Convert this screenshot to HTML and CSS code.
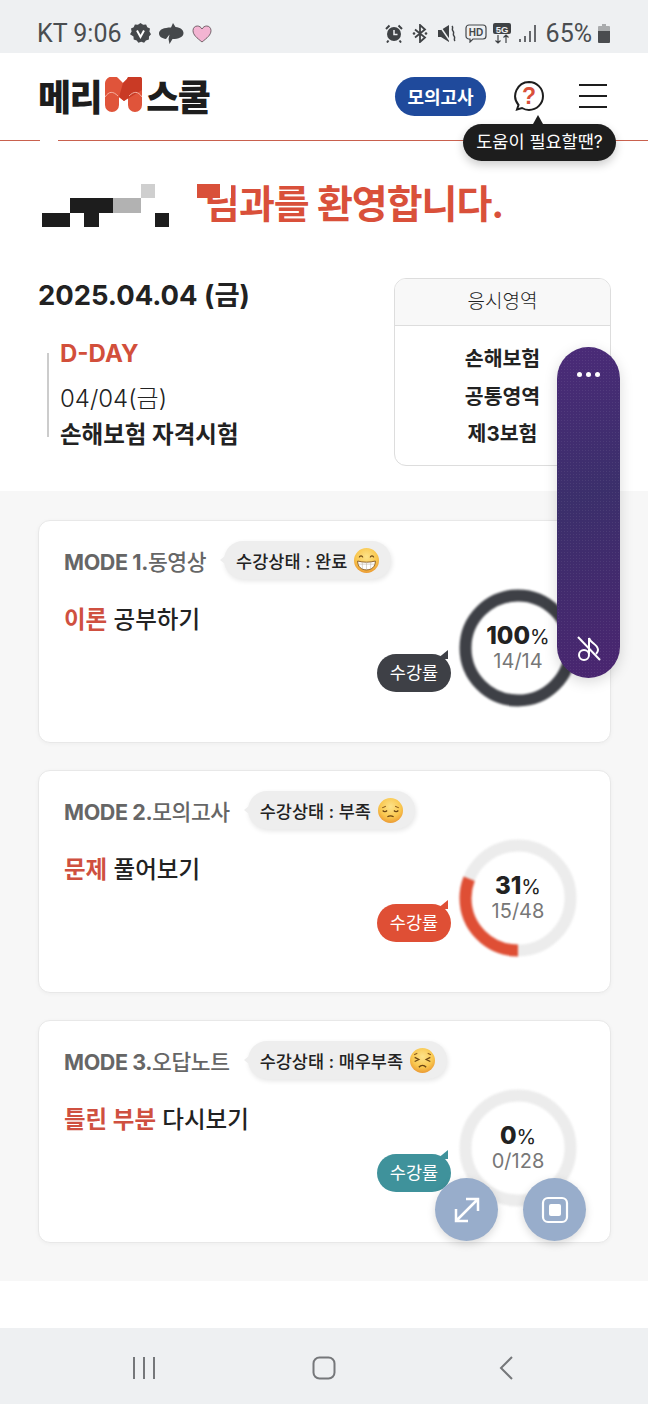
FILE: index.html
```html
<!DOCTYPE html>
<html lang="ko">
<head>
    <meta charset="UTF-8">
    <meta name="viewport" content="width=device-width, initial-scale=1.0">
    <title>메리M스쿨</title>
    <link rel="stylesheet" href="styles.css">
</head>
<body>
    <svg class="defs" width="0" height="0">
        <defs>
            <radialGradient id="face" cx="50%" cy="35%" r="70%">
                <stop offset="0" stop-color="#fde38a"/>
                <stop offset="0.6" stop-color="#f9c74f"/>
                <stop offset="1" stop-color="#e8902c"/>
            </radialGradient>
        </defs>
    </svg>

    <div class="status-bar">
        <div class="status-left">
            <span class="status-text">KT 9:06</span>
            <svg class="st-icon" width="21" height="21" viewBox="0 0 21 21"><path fill="#45484b" d="M10.5 0l2.6 1.7 3-.3 1.2 2.8 2.7 1.4-.6 3 1.6 2.6-2 2.3-.1 3-3 .9-1.8 2.4-2.8-1-2.9 1-1.7-2.4-3-.9-.2-3L0 11.2l1.6-2.6-.6-3 2.7-1.4 1.2-2.8 3 .3z"/><path fill="none" stroke="#fff" stroke-width="2" d="M7 7.5l3.5 6.5L14 7.5"/></svg>
            <svg class="st-icon" width="25" height="21" viewBox="0 0 25 21"><path fill="#45484b" d="M14 0l-2 4.500C5 4.500 0 6.500 0 10.500c0 3 3 5 7 5.500l3.500-4.500-1 4.500 1 5 3-5c6 0 11-2 11-6 0-3-3-5.500-8-6z"/></svg>
            <svg class="st-icon" width="20" height="18" viewBox="0 0 20 18"><path fill="#f3b4d2" stroke="#55484e" stroke-width="0.8" d="M10 17C5 13 1 10 1 5.500 1 2.800 3 1 5.300 1 7.300 1 9 2.200 10 4c1-1.800 2.700-3 4.700-3C17 1 19 2.800 19 5.500 19 10 15 13 10 17z"/></svg>
        </div>
        <div class="status-right">
            <svg width="18" height="19" viewBox="0 0 18 19"><circle cx="9" cy="10" r="7" fill="#3f4245"/><path d="M9 6v4.500h3.500" stroke="#eef0f2" stroke-width="1.500" fill="none"/><path d="M1 5l3.500-3.500M17 5l-3.500-3.500M3.500 16.500L2 18.500M14.500 16.500l1.500 2" stroke="#3f4245" stroke-width="2"/></svg>
            <svg width="16" height="19" viewBox="0 0 16 19"><path d="M3 5.500l10 8-5 4.500V1l5 4.500-10 8" stroke="#3f4245" stroke-width="1.800" fill="none"/><circle cx="2" cy="9.500" r="1.300" fill="#3f4245"/><circle cx="14" cy="9.500" r="1.300" fill="#3f4245"/></svg>
            <svg class="st-mute" width="18" height="19" viewBox="0 0 18 19"><path fill="#3f4245" d="M0 6h3l8-5v17l-8-5H0z"/><path d="M1 1l11 16" stroke="#eef0f2" stroke-width="1.400"/><path d="M14 2c2 2-1 3 1 5s-1 3 1 5-1 3 1 5" stroke="#3f4245" stroke-width="1.500" fill="none"/></svg>
            <svg width="22" height="19" viewBox="0 0 22 19"><path d="M4 1h14a3 3 0 0 1 3 3v8a3 3 0 0 1-3 3H8l-3 3v-3H4a3 3 0 0 1-3-3V4a3 3 0 0 1 3-3z" fill="none" stroke="#45484b" stroke-width="1.200"/><text x="11" y="12" class="svg-small" text-anchor="middle">HD</text></svg>
            <svg class="st-5g" width="18" height="21" viewBox="0 0 18 21"><rect width="18" height="11" rx="2" fill="#3f4245"/><text x="9" y="9.500" class="svg-5g" text-anchor="middle">5G</text><path d="M5 12v8M2.500 17.500L5 20l2.500-2.500M13 20v-8M10.500 14.500L13 12l2.500 2.500" stroke="#3f4245" stroke-width="1.200" fill="none"/></svg>
            <svg class="st-signal" width="18" height="17" viewBox="0 0 18 17"><path d="M1 14v3M6 11v6M11 6v11M16 0v17" stroke="#45484b" stroke-width="1.600"/></svg>
            <span class="status-text">65%</span>
            <svg class="battery" width="12" height="19" viewBox="0 0 12 19"><path fill="#a9abad" d="M4 0h4v2h3a1 1 0 0 1 1 1v4H0V3a1 1 0 0 1 1-1h3z"/><path fill="#4a4c4f" d="M0 7h12v11a1 1 0 0 1-1 1H1a1 1 0 0 1-1-1z"/></svg>
        </div>
    </div>

    <header class="header">
        <div class="logo">
            <span>메리</span>
            <svg class="logo-m" width="37" height="35" viewBox="0 0 37 35">
                <path fill="#e0543a" d="M0 8a8 8 0 0 1 14-6l4 4 4-4a8 8 0 0 1 15 6v20a7 7 0 0 1-14 0V20l-4 4-5-4v8a7 7 0 0 1-14 0z"/>
                <path fill="#c93a25" d="M18 6l4-4a8 8 0 0 1 15 6v5L19 24l-5-4z"/>
                <path d="M0 20c4-6 8-6 13-1M24 19c5-5 9-5 13 1" stroke="#f4b0a0" stroke-width="1" fill="none"/>
            </svg>
            <span>스쿨</span>
        </div>
        <div class="header-right">
            <button class="exam-button">모의고사</button>
            <svg class="help-icon" width="32" height="32" viewBox="0 0 32 32">
                <path d="M16 2a14 14 0 0 1 0 28c-3 0-5-.8-7-2l-5 1.500 1.500-4.500A14 14 0 0 1 16 2z" fill="#fff" stroke="#1d1d1d" stroke-width="2"/>
                <text x="16" y="24" class="svg-help" text-anchor="middle">?</text>
            </svg>
            <div class="menu-icon"><i></i><i></i><i></i></div>
        </div>
        <div class="tooltip">도움이 필요할땐?</div>
        <span class="line-gap"></span>
    </header>

    <section class="intro">
        <h1 class="welcome">
            <svg class="mosaic" width="128" height="43" viewBox="0 0 128 43">
                <rect x="0" y="29" width="28" height="14" fill="#1d1d1d"/>
                <rect x="28" y="14" width="43" height="15" fill="#1d1d1d"/>
                <rect x="42" y="29" width="15" height="14" fill="#1d1d1d"/>
                <rect x="71" y="14" width="28" height="15" fill="#b2b2b2"/>
                <rect x="99" y="0" width="14" height="14" fill="#cfcfcf"/>
                <rect x="113" y="29" width="14" height="14" fill="#1d1d1d"/>
            </svg>
            <span class="welcome-text">님과를 환영합니다.<span class="welcome-mask"></span><span class="welcome-block"></span></span>
        </h1>
        <div class="intro-row">
            <div class="exam-info">
                <div class="exam-date">2025.04.04 (금)</div>
                <div class="dday-box">
                    <div class="dday">D-DAY</div>
                    <div class="dday-date">04/04(금)</div>
                    <div class="dday-name">손해보험 자격시험</div>
                </div>
            </div>
            <div class="subject-table">
                <div class="subject-head">응시영역</div>
                <div class="subject-list">
                    <div>손해보험</div>
                    <div>공통영역</div>
                    <div>제3보험</div>
                </div>
            </div>
        </div>
    </section>

    <main class="modes">
        <div class="card">
            <div class="card-head">
                <span class="mode-title"><b>MODE 1.</b>동영상</span>
                <span class="status-pill">수강상태 : 완료
                    <svg class="emoji" width="25" height="25" viewBox="0 0 24 24"><circle cx="12" cy="12" r="12" fill="url(#face)"/><path d="M5 9c.8-2 2.700-2 3.500 0M15.500 9c.8-2 2.700-2 3.500 0" stroke="#6b4513" stroke-width="1.200" fill="none"/><path d="M3.500 12.500c5 1.500 12 1.500 17 0 0 6-4 8.500-8.500 8.500s-8.500-2.500-8.500-8.500z" fill="#fff" stroke="#7a4a14" stroke-width="0.800"/><path d="M4 15.500h16M12 13.500v7.500M8 13.500v7M16 13.500v7" stroke="#b9b09c" stroke-width="0.500"/></svg>
                </span>
            </div>
            <div class="card-body">
                <div class="card-subject"><em>이론</em> 공부하기</div>
                <div class="progress">
                    <span class="rate-bubble dark">수강률</span>
                    <div class="ring">
                        <svg width="118" height="118" viewBox="0 0 118 118"><circle cx="59" cy="59" r="52.500" fill="none" stroke="#3e4046" stroke-width="12"/></svg>
                        <div class="ring-text"><strong>100<small>%</small></strong><span>14/14</span></div>
                    </div>
                </div>
            </div>
        </div>

        <div class="card">
            <div class="card-head">
                <span class="mode-title"><b>MODE 2.</b>모의고사</span>
                <span class="status-pill">수강상태 : 부족
                    <svg class="emoji" width="25" height="25" viewBox="0 0 24 24"><circle cx="12" cy="12" r="12" fill="url(#face)"/><path d="M4 9.500l3.500-1.500M20 9.500L16.500 8" stroke="#8a5a1c" stroke-width="1" fill="none"/><path d="M4.500 12c1.200 1.500 3 1.500 4.200 0M15.300 12c1.200 1.500 3 1.500 4.200 0" stroke="#6b4513" stroke-width="1.200" fill="none"/><path d="M9 18c2-1.200 4-1.200 6 0" stroke="#6b4513" stroke-width="1.200" fill="none"/></svg>
                </span>
            </div>
            <div class="card-body">
                <div class="card-subject"><em>문제</em> 풀어보기</div>
                <div class="progress">
                    <span class="rate-bubble red">수강률</span>
                    <div class="ring">
                        <svg width="118" height="118" viewBox="0 0 118 118"><circle cx="59" cy="59" r="52.500" fill="none" stroke="#ececec" stroke-width="12"/><circle class="ring-arc" cx="59" cy="59" r="52.500" fill="none" stroke="#df4f35" stroke-width="12" pathLength="100" stroke-dasharray="31 69" transform="rotate(90 59 59)"/></svg>
                        <div class="ring-text"><strong>31<small>%</small></strong><span>15/48</span></div>
                    </div>
                </div>
            </div>
        </div>

        <div class="card">
            <div class="card-head">
                <span class="mode-title"><b>MODE 3.</b>오답노트</span>
                <span class="status-pill">수강상태 : 매우부족
                    <svg class="emoji" width="25" height="25" viewBox="0 0 24 24"><circle cx="12" cy="12" r="12" fill="url(#face)"/><path d="M4.500 9l4 2-4 2M19.500 9l-4 2 4 2" stroke="#6b4513" stroke-width="1.200" fill="none"/><path d="M8.500 18.500c2-2.500 5-2.500 7 0" stroke="#6b4513" stroke-width="1.300" fill="none"/><path d="M4 6.500l3-1.500M20 6.500l-3-1.500" stroke="#8a5a1c" stroke-width="1" fill="none"/></svg>
                </span>
            </div>
            <div class="card-body">
                <div class="card-subject"><em>틀린 부분</em> 다시보기</div>
                <div class="progress">
                    <span class="rate-bubble teal">수강률</span>
                    <div class="ring">
                        <svg width="118" height="118" viewBox="0 0 118 118"><circle cx="59" cy="59" r="52.500" fill="none" stroke="#ececec" stroke-width="12"/></svg>
                        <div class="ring-text"><strong>0<small>%</small></strong><span>0/128</span></div>
                    </div>
                </div>
            </div>
        </div>
    </main>

    <div class="page-end"></div>

    <nav class="nav-bar">
        <svg width="24" height="24" viewBox="0 0 24 24"><path d="M2 1v22M12 1v22M22 1v22" stroke="#75777a" stroke-width="2"/></svg>
        <svg class="nav-home" width="24" height="24" viewBox="0 0 24 24"><rect x="1.500" y="1.500" width="21" height="21" rx="6" fill="none" stroke="#75777a" stroke-width="2"/></svg>
        <svg width="14" height="24" viewBox="0 0 14 24"><path d="M13 1L2 12l11 11" fill="none" stroke="#75777a" stroke-width="2"/></svg>
    </nav>

    <!-- floating media controls -->
    <div class="player">
        <div class="player-dots"><i></i><i></i><i></i></div>
        <svg width="26" height="26" viewBox="0 0 26 26"><circle cx="8" cy="20" r="5" fill="none" stroke="#fff" stroke-width="2"/><path d="M13 19V3c1 5 9 6 9 12 0 2-1 3-2 4" fill="none" stroke="#fff" stroke-width="2"/><path d="M2 2l22 23" stroke="#fff" stroke-width="2"/></svg>
    </div>
    <button class="fab fab-expand"><svg width="28" height="28" viewBox="0 0 28 28"><path d="M3 25L25 3M13 3h12v12M3 13v12h12" fill="none" stroke="#fff" stroke-width="2.500"/></svg></button>
    <button class="fab fab-stop"><svg width="28" height="28" viewBox="0 0 28 28"><rect x="2" y="2" width="24" height="24" rx="5" fill="none" stroke="#fff" stroke-width="2.200"/><rect x="8" y="8" width="12" height="12" rx="2" fill="#fff"/></svg></button>
</body>
</html>
```

FILE: styles.css
```css
* {
    box-sizing: border-box;
}

body {
    font-family: Inter, "Noto Sans CJK KR", sans-serif;
    margin: 0;
    width: 648px;
    height: 1404px;
    overflow: hidden;
    position: relative;
    background-color: #fff;
    color: #222;
}

.defs {
    position: absolute;
}

/* Status bar */
.status-bar {
    height: 53px;
    padding: 14px 38px 0 37px;
    display: flex;
    justify-content: space-between;
    align-items: center;
    background-color: #eef0f2;
}

.status-left,
.status-right {
    display: flex;
    align-items: center;
}

.status-left {
    gap: 7px;
}

.status-right {
    gap: 9px;
}

.status-text {
    font-family: Roboto, sans-serif;
    font-size: 25px;
    color: #4a4d50;
}

.status-left .st-icon {
    margin-left: 1px;
}

.st-mute {
    margin-left: 1px;
}

.st-5g {
    margin-left: -3px;
}

.st-signal {
    margin-left: -1px;
}

.battery {
    margin-left: -3px;
}

.svg-small {
    font: bold 10px "Liberation Sans", sans-serif;
    fill: #45484b;
}

.svg-5g {
    font: bold 9.5px "Liberation Sans", sans-serif;
    fill: #eef0f2;
}

.svg-help {
    font: 900 23px "Liberation Sans", sans-serif;
    fill: #d9503a;
}

/* Header */
.header {
    height: 88px;
    padding: 0 41px 0 38px;
    display: flex;
    justify-content: space-between;
    align-items: center;
    position: relative;
    border-bottom: 1px solid #c9614e;
}

.logo {
    display: flex;
    align-items: center;
    gap: 4px;
    font-family: "Noto Sans CJK KR", sans-serif;
    font-size: 36px;
    font-weight: 900;
    letter-spacing: -1.500px;
    color: #1d1d1d;
    margin-top: -4px;
}

.header-right {
    display: flex;
    align-items: center;
    margin-top: -1px;
}

.exam-button {
    width: 91px;
    height: 39px;
    border: none;
    border-radius: 20px;
    background-color: #1f4a9c;
    color: white;
    font-family: inherit;
    font-size: 18px;
    font-weight: 700;
    padding: 0;
}

.help-icon {
    margin-left: 27px;
}

.menu-icon {
    width: 28px;
    margin-left: 34px;
    display: flex;
    flex-direction: column;
    gap: 8.500px;
}

.menu-icon i {
    display: block;
    height: 2.500px;
    background-color: #1d1d1d;
}

.tooltip {
    position: absolute;
    left: 463px;
    top: 71px;
    width: 153px;
    height: 37px;
    border-radius: 19px;
    background-color: #1d1d1d;
    color: white;
    font-size: 17.500px;
    line-height: 36px;
    text-align: center;
    box-shadow: 0 4px 10px rgba(0, 0, 0, 0.2);
}

.tooltip::before {
    content: "";
    position: absolute;
    left: 70px;
    top: -9px;
    border-left: 5px solid transparent;
    border-right: 5px solid transparent;
    border-bottom: 9px solid #1d1d1d;
}

.line-gap {
    position: absolute;
    left: 40px;
    top: 85px;
    width: 18px;
    height: 4px;
    background-color: #fff;
}

/* Intro */
.intro {
    height: 350px;
    padding: 43px 37px 0 38px;
}

.welcome {
    margin: 0 0 0 4px;
    height: 43px;
    display: flex;
    align-items: flex-start;
    font-size: 39px;
    font-weight: 700;
    color: #d9503a;
    letter-spacing: -1px;
}

.mosaic {
    flex-shrink: 0;
}

.welcome-text {
    position: relative;
    margin: -2px 0 0 34px;
    line-height: 43px;
    white-space: nowrap;
}

.welcome-mask {
    position: absolute;
    left: -7px;
    top: 2px;
    width: 34px;
    height: 14px;
    background-color: #fff;
}

.welcome-block {
    position: absolute;
    left: -7px;
    top: 2px;
    width: 23px;
    height: 14px;
    background-color: #d9503a;
}

.intro-row {
    display: flex;
    justify-content: space-between;
    margin-top: 51px;
}

.exam-date {
    font-size: 27.400px;
    font-weight: 700;
    line-height: 34px;
    white-space: nowrap;
}

.dday-box {
    display: flow-root;
    margin: 41px 0 0 9px;
    padding-left: 11px;
    border-left: 2px solid #ccc;
    height: 84px;
}

.dday {
    font-size: 24px;
    font-weight: 700;
    line-height: 28px;
    margin-top: -13px;
    color: #d24f3b;
}

.dday-date {
    font-size: 24px;
    font-weight: 300;
    line-height: 32px;
    margin-top: 15px;
}

.dday-name {
    font-size: 23.500px;
    font-weight: 700;
    line-height: 34px;
    margin-top: 3px;
    white-space: nowrap;
}

.subject-table {
    width: 217px;
    height: 188px;
    border: 1px solid #ddd;
    border-radius: 12px;
    overflow: hidden;
    text-align: center;
}

.subject-head {
    height: 47px;
    line-height: 45px;
    font-size: 19px;
    font-weight: 300;
    background-color: #f8f8f8;
    border-bottom: 1px solid #ddd;
}

.subject-list {
    padding-top: 14px;
    font-size: 20.500px;
    font-weight: 700;
    line-height: 37.500px;
}

/* Mode cards */
.modes {
    height: 790px;
    padding: 29px 37px 0 38px;
    display: flex;
    flex-direction: column;
    gap: 27px;
    background-color: #f7f7f7;
}

.card {
    height: 223px;
    padding: 20px 33px 0 25px;
    background-color: white;
    border: 1px solid #e8e8e8;
    border-radius: 12px;
    box-shadow: 0 1px 4px rgba(0, 0, 0, 0.04);
}

.card-head {
    display: flex;
    align-items: center;
    height: 38px;
}

.mode-title {
    font-size: 21.500px;
    font-weight: 500;
    color: #666;
    letter-spacing: -0.400px;
    white-space: nowrap;
}

.mode-title b {
    font-weight: 700;
}

.status-pill {
    position: relative;
    height: 38px;
    margin-left: 18px;
    padding: 0 12px;
    display: flex;
    align-items: center;
    gap: 7px;
    border-radius: 19px;
    background-color: #eee;
    font-size: 17.500px;
    font-weight: 500;
    color: #222;
    white-space: nowrap;
    box-shadow: 1px 2px 5px rgba(0, 0, 0, 0.1);
}

.status-pill::before {
    content: "";
    position: absolute;
    left: -4px;
    top: 15px;
    border-top: 4px solid transparent;
    border-bottom: 4px solid transparent;
    border-right: 5px solid #eee;
}

.card-body {
    display: flex;
    justify-content: space-between;
    align-items: flex-start;
    margin-top: 10px;
}

.card-subject {
    margin-top: 14px;
    font-size: 23.500px;
    font-weight: 500;
    line-height: 34px;
}

.card-subject em {
    font-style: normal;
    font-weight: 700;
    color: #cf5040;
}

.progress {
    display: flex;
    align-items: flex-start;
    gap: 8px;
}

.rate-bubble {
    position: relative;
    margin-top: 65px;
    width: 74px;
    height: 38px;
    border-radius: 19px;
    color: white;
    font-size: 17.500px;
    line-height: 37px;
    text-align: center;
}

.rate-bubble::after {
    content: "";
    position: absolute;
    right: 3px;
    top: -4px;
    border-left: 11px solid transparent;
    border-bottom: 9px solid;
    border-bottom-color: inherit;
}

.rate-bubble.dark {
    background-color: #3e4046;
    border-color: #3e4046;
}

.rate-bubble.red {
    background-color: #df4f35;
    border-color: #df4f35;
}

.rate-bubble.teal {
    background-color: #3f929b;
    border-color: #3f929b;
}

.ring {
    position: relative;
    width: 118px;
    height: 118px;
}

.ring svg {
    display: block;
    filter: blur(0.8px);
}

.ring-text {
    position: absolute;
    inset: 0;
    display: flex;
    flex-direction: column;
    align-items: center;
    justify-content: center;
}

.ring-text strong {
    font-size: 24px;
    font-weight: 800;
    line-height: 26px;
    color: #222;
}

.ring-text small {
    font-size: 20px;
    font-weight: 400;
}

.ring-text span {
    font-size: 20px;
    line-height: 23px;
    font-weight: 400;
    color: #777;
}

.page-end {
    height: 47px;
}

/* Bottom navigation */
.nav-bar {
    height: 76px;
    padding: 4px 135px 0 132px;
    display: flex;
    justify-content: space-between;
    align-items: center;
    background-color: #eef0f2;
}

.nav-home {
    margin-left: -8px;
}

/* Floating controls */
.player {
    position: absolute;
    left: 557px;
    top: 347px;
    width: 63px;
    height: 331px;
    padding: 25px 0 17px;
    border-radius: 32px;
    display: flex;
    flex-direction: column;
    justify-content: space-between;
    align-items: center;
    background-color: #45296f;
    background-image:
        radial-gradient(rgba(255, 255, 255, 0.07) 0.7px, transparent 0.8px),
        linear-gradient(160deg, #4b2a78, #3b2f6b 45%, #4a2570);
    background-size: 3px 3px, 100% 100%;
    box-shadow: 0 4px 14px rgba(0, 0, 0, 0.15);
}

.player-dots {
    display: flex;
    gap: 4px;
}

.player-dots i {
    display: block;
    width: 5px;
    height: 5px;
    border-radius: 50%;
    background-color: white;
}

.fab {
    position: absolute;
    top: 1178px;
    width: 63px;
    height: 63px;
    border: none;
    border-radius: 50%;
    padding: 0;
    display: flex;
    justify-content: center;
    align-items: center;
    background-color: #98adcb;
    box-shadow: 0 3px 8px rgba(0, 0, 0, 0.15);
}

.fab-expand {
    left: 435px;
}

.fab-stop {
    left: 523px;
}
```
